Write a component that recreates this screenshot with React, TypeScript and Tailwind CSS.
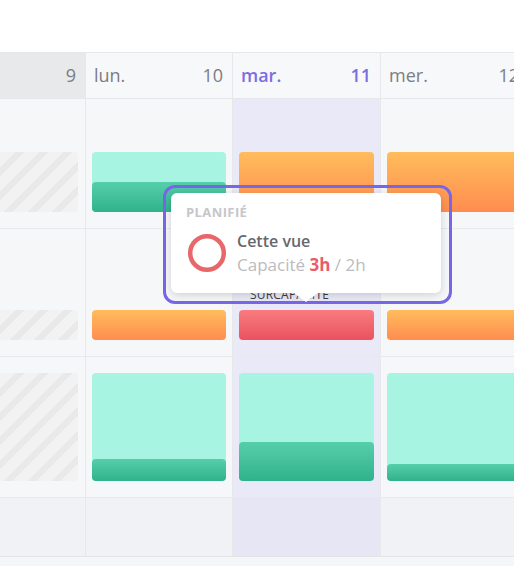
import React from "react";

type Block =
  | { kind: "hatch"; h: number }
  | { kind: "teal"; h: number; dark: number }
  | { kind: "orange"; h: number }
  | { kind: "red"; h: number; label?: string }
  | { kind: "none" };

type Col = {
  w: string;
  day?: string;
  num: string;
  today?: boolean;
  weekend?: boolean;
  cells: Block[];
};

const cols: Col[] = [
  {
    w: "w-[86px]",
    num: "9",
    weekend: true,
    cells: [
      { kind: "hatch", h: 60 },
      { kind: "hatch", h: 30 },
      { kind: "hatch", h: 108 },
    ],
  },
  {
    w: "w-[147px]",
    day: "lun.",
    num: "10",
    cells: [
      { kind: "teal", h: 60, dark: 30 },
      { kind: "orange", h: 30 },
      { kind: "teal", h: 108, dark: 22 },
    ],
  },
  {
    w: "w-[148px]",
    day: "mar.",
    num: "11",
    today: true,
    cells: [
      { kind: "orange", h: 60 },
      { kind: "red", h: 30, label: "Surcapacité" },
      { kind: "teal", h: 108, dark: 39 },
    ],
  },
  {
    w: "w-[148px]",
    day: "mer.",
    num: "12",
    cells: [
      { kind: "orange", h: 60 },
      { kind: "orange", h: 30 },
      { kind: "teal", h: 108, dark: 17 },
    ],
  },
];

const rowHeights = ["h-[130px]", "h-[128px]", "h-[141px]"];

function BlockView({ b, weekend }: { b: Block; weekend?: boolean }) {
  const pad = weekend ? "pr-[7px]" : "px-[6px]";
  if (b.kind === "none") return null;
  let inner: React.ReactNode = null;
  if (b.kind === "hatch") {
    inner = (
      <div
        className="w-full rounded-r-[4px] bg-[repeating-linear-gradient(135deg,#f2f2f3_0px,#f2f2f3_11px,#e9e9ea_11px,#e9e9ea_17px)]"
        style={{ height: b.h }}
      />
    );
  } else if (b.kind === "teal") {
    inner = (
      <div
        className="w-full rounded-[4px] bg-[#a6f4e1] flex flex-col justify-end"
        style={{ height: b.h }}
      >
        <div
          className="w-full rounded-[4px] bg-gradient-to-b from-[#55cfaa] to-[#2fb28b]"
          style={{ height: b.dark }}
        />
      </div>
    );
  } else if (b.kind === "orange") {
    inner = (
      <div
        className="w-full rounded-[4px] bg-gradient-to-b from-[#ffbc5c] to-[#ff8c50]"
        style={{ height: b.h }}
      />
    );
  } else if (b.kind === "red") {
    inner = (
      <>
        {b.label && (
          <div className="pl-[11px] mb-[8px] text-[12px] leading-[14px] font-medium uppercase tracking-[0.2px] text-[#3c3c40]">
            {b.label}
          </div>
        )}
        <div
          className="w-full rounded-[4px] bg-gradient-to-b from-[#f97b80] to-[#e9525e]"
          style={{ height: b.h }}
        />
      </>
    );
  }
  return <div className={`h-full flex flex-col justify-end pb-4 ${pad}`}>{inner}</div>;
}

function Column({ c }: { c: Col }) {
  const body = c.today ? "bg-[#eae9f7]" : "bg-[#f6f7f9]";
  const bottom = c.today ? "bg-[#e7e6f4]" : "bg-[#f1f2f5]";
  return (
    <div className={`${c.w} shrink-0 flex flex-col border-r border-[#e7e8eb]`}>
      <div
        className={`h-[47px] border-y border-[#e6e7ea] flex items-center justify-between pl-[8px] pr-[9px] text-[18px] ${
          c.weekend ? "bg-[#e8e9eb]" : "bg-[#f7f8fa]"
        } ${c.today ? "text-[#7b6fdf] font-semibold" : "text-[#7d7d82]"}`}
      >
        <span>{c.day ?? ""}</span>
        <span>{c.num}</span>
      </div>
      {c.cells.map((b, i) => (
        <div key={i} className={`${rowHeights[i]} border-b border-[#e8e9ec] ${body}`}>
          <BlockView b={b} weekend={c.weekend} />
        </div>
      ))}
      <div className={`h-[59px] border-b border-[#e3e4e8] ${bottom}`} />
    </div>
  );
}

export default function App() {
  return (
    <div className="relative w-[514px] h-[566px] overflow-hidden bg-[#f5f6f8] font-['Open_Sans',sans-serif]">
      <div className="h-[52px] bg-white" />
      <div className="flex">
        {cols.map((c, i) => (
          <Column key={i} c={c} />
        ))}
      </div>

      {/* Tooltip */}
      <div className="absolute left-[163px] top-[185px] w-[289px] h-[119px] rounded-[12px] border-[3px] border-[#7767e6] pl-[5px] pt-[5px] pr-[8px] pb-[8px]">
        <div className="relative w-full h-full rounded-[6px] bg-white shadow-[0_2px_8px_rgba(0,0,0,0.16)] pl-[15px] pt-[10px]">
          <div className="text-[13px] leading-[18px] font-bold uppercase tracking-[0.4px] text-[#c6c6cb]">
            Planifié
          </div>
          <div className="mt-2 flex items-center">
            <svg width="40" height="40" viewBox="0 0 40 40" className="ml-[1px]">
              <circle cx="20" cy="20" r="16.8" fill="none" stroke="#e8676b" strokeWidth="4.5" />
            </svg>
            <div className="ml-[10px] flex flex-col">
              <div className="text-[16px] leading-[24px] font-semibold text-[#67676e]">Cette vue</div>
              <div className="text-[17px] leading-[24px] text-[#bbbbc0]">
                Capacité <span className="font-bold text-[#ea5b68]">3h</span> / 2h
              </div>
            </div>
          </div>
          <div className="absolute left-[123px] top-full w-0 h-0 border-x-[12px] border-x-transparent border-t-[9px] border-t-white" />
        </div>
      </div>
    </div>
  );
}
